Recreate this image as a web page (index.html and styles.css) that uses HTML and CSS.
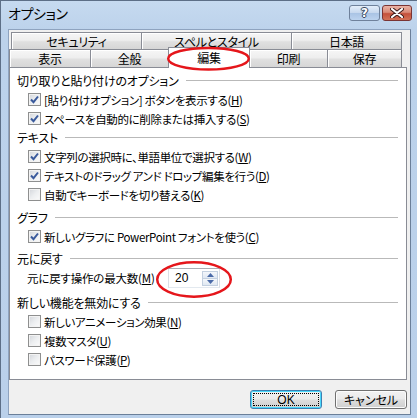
FILE: index.html
```html
<!DOCTYPE html>
<html lang="ja">
<head>
<meta charset="utf-8">
<title>オプション</title>
<link rel="stylesheet" href="styles.css">
</head>
<body>
<div class="window">
  <div class="titlebar">
    <span class="title">オプション</span>
    <div class="tb-buttons">
      <span class="tb-btn help">?</span>
      <span class="tb-btn close"><svg width="14" height="10" viewBox="0 0 14 10"><path d="M2 1 L12 9 M12 1 L2 9" stroke="#3a1a1a" stroke-width="4" stroke-linecap="round"/><path d="M2 1 L12 9 M12 1 L2 9" stroke="#fff" stroke-width="2.2" stroke-linecap="round"/></svg></span>
    </div>
  </div>
  <div class="client">
    <div class="tabrow back">
      <div class="tab t-sec">セキュリティ</div>
      <div class="tab t-spell">スペルとスタイル</div>
      <div class="tab t-jp last">日本語</div>
    </div>
    <div class="tabrow front">
      <div class="tab t-view">表示</div>
      <div class="tab t-gen">全般</div>
      <div class="tab t-edit selected">編集</div>
      <div class="tab t-print">印刷</div>
      <div class="tab t-save last">保存</div>
    </div>
    <div class="panel">
      <div class="group">
        <div class="heading"><span>切り取りと貼り付けのオプション</span></div>
        <div class="row"><span class="cb on"><svg width="11" height="11" viewBox="0 0 11 11"><path d="M2 5.5 L4.5 8.2 L9 2.5" fill="none" stroke="#3a5a9c" stroke-width="2"/></svg></span><span class="label">[貼り付けオプション] ボタンを表示する(<u>H</u>)</span></div>
        <div class="row"><span class="cb on"><svg width="11" height="11" viewBox="0 0 11 11"><path d="M2 5.5 L4.5 8.2 L9 2.5" fill="none" stroke="#3a5a9c" stroke-width="2"/></svg></span><span class="label">スペースを自動的に削除または挿入する(<u>S</u>)</span></div>
      </div>
      <div class="group g2">
        <div class="heading"><span>テキスト</span></div>
        <div class="row"><span class="cb on"><svg width="11" height="11" viewBox="0 0 11 11"><path d="M2 5.5 L4.5 8.2 L9 2.5" fill="none" stroke="#3a5a9c" stroke-width="2"/></svg></span><span class="label">文字列の選択時に、単語単位で選択する(<u>W</u>)</span></div>
        <div class="row"><span class="cb on"><svg width="11" height="11" viewBox="0 0 11 11"><path d="M2 5.5 L4.5 8.2 L9 2.5" fill="none" stroke="#3a5a9c" stroke-width="2"/></svg></span><span class="label">テキストのドラッグ アンド ドロップ編集を行う(<u>D</u>)</span></div>
        <div class="row"><span class="cb"></span><span class="label">自動でキーボードを切り替える(<u>K</u>)</span></div>
      </div>
      <div class="group g3">
        <div class="heading"><span>グラフ</span></div>
        <div class="row"><span class="cb on"><svg width="11" height="11" viewBox="0 0 11 11"><path d="M2 5.5 L4.5 8.2 L9 2.5" fill="none" stroke="#3a5a9c" stroke-width="2"/></svg></span><span class="label">新しいグラフに PowerPoint フォントを使う(<u>C</u>)</span></div>
      </div>
      <div class="group g4">
        <div class="heading"><span>元に戻す</span></div>
        <div class="row spin-row">
          <span class="spin-label">元に戻す操作の最大数(<u>M</u>)</span>
          <div class="spinner">
            <span class="spin-value">20</span>
            <div class="spin-btns">
              <span class="spin-btn"><svg width="7" height="4" viewBox="0 0 7 4"><path d="M0 4 L3.5 0 L7 4 Z" fill="#4a6aa8"/></svg></span>
              <span class="spin-btn"><svg width="7" height="4" viewBox="0 0 7 4"><path d="M0 0 L3.5 4 L7 0 Z" fill="#4a6aa8"/></svg></span>
            </div>
          </div>
        </div>
      </div>
      <div class="group g5">
        <div class="heading"><span>新しい機能を無効にする</span></div>
        <div class="row"><span class="cb"></span><span class="label">新しいアニメーション効果(<u>N</u>)</span></div>
        <div class="row"><span class="cb"></span><span class="label">複数マスタ(<u>U</u>)</span></div>
        <div class="row"><span class="cb"></span><span class="label">パスワード保護(<u>P</u>)</span></div>
      </div>
    </div>
    <div class="buttons">
      <button class="btn ok"><span class="focus">OK</span></button>
      <button class="btn">キャンセル</button>
    </div>
  </div>
  <svg class="annot" width="417" height="418" viewBox="0 0 417 418">
    <ellipse cx="208.5" cy="58.7" rx="40.3" ry="10.8" fill="none" stroke="#e5161b" stroke-width="2.5"/>
    <ellipse cx="194" cy="279.5" rx="36.8" ry="17.2" fill="none" stroke="#e5161b" stroke-width="2.5"/>
  </svg>
</div>
</body>
</html>
```

FILE: styles.css
```css
* { box-sizing: border-box; }
html, body { margin: 0; padding: 0; }
body {
  width: 417px;
  height: 418px;
  overflow: hidden;
  font-family: "Noto Sans CJK JP", "Noto Sans", sans-serif;
  font-feature-settings: "palt";
  font-size: 12px;
  color: #000;
  background: #bfd4ec;
}
.window {
  position: relative;
  width: 417px;
  height: 418px;
  background: linear-gradient(to bottom, #c6daf0 0, #bcd2eb 30px, #bad0ea 100%);
  border-left: 1px solid #5d6f87;
  border-top: 1px solid #5d6f87;
  padding: 0 0 0 7px;
}
.titlebar {
  height: 28px;
  display: flex;
  align-items: flex-start;
  justify-content: space-between;
}
.title {
  font-size: 14px;
  line-height: 15px;
  margin-top: 5px;
  letter-spacing: -0.4px;
}
.tb-buttons {
  display: flex;
  gap: 2px;
  margin-top: 4px;
  margin-right: 5px;
}
.tb-btn {
  height: 16px;
  border-radius: 3px;
  display: flex;
  align-items: center;
  justify-content: center;
}
.help {
  width: 31px;
  border: 1px solid #6f819b;
  background: linear-gradient(to bottom, #e4eefa 0, #c5d7ee 50%, #a9c3e4 51%, #bcd3ef 100%);
  color: #fff;
  font-family: "DejaVu Sans", sans-serif;
  font-weight: bold;
  font-size: 12px;
  text-shadow: 0 0 1px #3b4b63, 0 0 1px #3b4b63, 1px 0 0 #3b4b63, -1px 0 0 #3b4b63, 0 1px 0 #3b4b63, 0 -1px 0 #3b4b63;
}
.close {
  width: 30px;
  border: 1px solid #7a3434;
  background: linear-gradient(to bottom, #eab3a6 0, #d98a77 45%, #c4503b 55%, #d27257 100%);
}
.client {
  width: 403px;
  height: 386px;
  background: #f0f0f0;
  border: 1px solid #8ea3bf;
  border-right-color: #6b7f99;
  border-bottom-color: #6b7f99;
  padding-top: 2px;
}
.tabrow {
  display: flex;
  height: 17px;
}
.tabrow.back { margin-left: 2px; }
.tabrow.front { height: 18px; position: relative; }
.tab {
  border: 1px solid #898c95;
  border-right: none;
  border-bottom: none;
  background: linear-gradient(to bottom, #f6f6f6 0, #eeeeee 45%, #e0e0e0 55%, #d6d6d6 100%);
  box-shadow: inset 1px 1px 0 #ffffff;
  display: flex;
  align-items: center;
  justify-content: center;
  line-height: 1;
  padding-top: 1px;
  letter-spacing: -0.3px;
}
.tab.last { border-right: 1px solid #898c95; }
.t-sec { width: 130px; }
.t-spell { width: 150px; }
.t-jp { width: 111px; }
.t-view { width: 81px; }
.t-gen { width: 78px; }
.t-edit { width: 82px; }
.t-print { width: 77px; border-left: none; }
.t-save { width: 75px; }
.tab.selected {
  position: relative;
  z-index: 2;
  background: #fff;
  box-shadow: none;
  border-right: 1px solid #898c95;
  margin-top: -2px;
  height: 21px;
  padding-bottom: 2px;
}
.panel {
  width: 398px;
  height: 313px;
  background: #fff;
  border: 1px solid #898c95;
  padding: 3px 8px 0 7px;
}
.group.g2 { margin-top: 0; }
.group.g3 { margin-top: 4px; }
.group.g4 { margin-top: 3px; }
.group.g5 { margin-top: 5px; }
.heading {
  height: 19px;
  display: flex;
  align-items: center;
  white-space: nowrap;
  letter-spacing: -0.2px;
}
.heading::after {
  content: "";
  flex: 1;
  height: 1px;
  background: #b9b9b9;
  margin-left: 7px;
}
.row {
  height: 19px;
  display: flex;
  align-items: center;
  padding-left: 11px;
  white-space: nowrap;
}
.cb {
  width: 13px;
  height: 13px;
  border: 1px solid #8e8f8f;
  background: linear-gradient(135deg, #d2d5da 0, #eceef0 50%, #fbfbfb 100%);
  box-shadow: inset 0 0 0 1px #f3f3f3;
  display: flex;
  align-items: center;
  justify-content: center;
  flex: none;
}
.cb svg { display: block; }
.label {
  margin-left: 3px;
  font-size: 11.5px;
  letter-spacing: -0.35px;
}
u { text-decoration: underline; text-underline-offset: 1px; }
.spin-row {
  height: 20px;
  padding-left: 10px;
}
.spin-label {
  width: 141px;
  font-size: 11.5px;
  letter-spacing: -0.2px;
}
.spinner {
  width: 52px;
  height: 20px;
  border: 1px solid #abadb3;
  border-left-color: #dbdfe6;
  border-right-color: #dbdfe6;
  border-bottom-color: #e3e9ef;
  background: #fff;
  display: flex;
  align-items: center;
  justify-content: space-between;
  padding: 0 1px 0 6px;
}
.spin-value { font-family: "Liberation Sans", sans-serif; font-size: 12px; }
.spin-btns {
  width: 16px;
  height: 15px;
  display: flex;
  flex-direction: column;
}
.spin-btn {
  flex: 1;
  border: 1px solid #c3d0e0;
  background: linear-gradient(to bottom, #f4f7fb, #e0e8f2);
  display: flex;
  align-items: center;
  justify-content: center;
}
.spin-btn + .spin-btn { border-top: none; }
.spin-btn svg { display: block; }
.buttons {
  width: 398px;
  display: flex;
  justify-content: flex-end;
  gap: 13px;
  margin-top: 10px;
}
.btn {
  width: 72px;
  height: 19px;
  border: 1px solid #707070;
  border-radius: 3px;
  background: linear-gradient(to bottom, #f2f2f2 0, #ebebeb 45%, #dddddd 55%, #cfcfcf 100%);
  box-shadow: inset 0 0 0 1px #fcfcfc;
  font-family: "Noto Sans CJK JP", sans-serif;
  font-feature-settings: "palt";
  font-size: 12px;
  line-height: 1;
  padding: 0;
  color: #000;
  display: flex;
  align-items: center;
  justify-content: center;
}
.btn.ok {
  border-color: #3c7fb1;
  box-shadow: inset 0 0 0 1px #48d7fb;
  padding: 2px;
}
.focus {
  width: 100%;
  height: 100%;
  border: 1px dotted #000;
  display: flex;
  align-items: center;
  justify-content: center;
  font-family: "Liberation Sans", sans-serif;
}
.annot {
  position: absolute;
  left: -1px;
  top: -1px;
  z-index: 10;
  pointer-events: none;
}
```
